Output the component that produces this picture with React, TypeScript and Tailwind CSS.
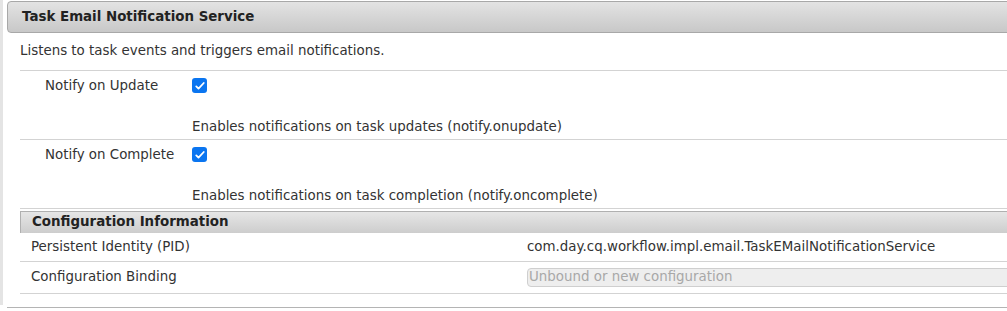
import { FC, ReactNode } from 'react'

const Check: FC = () => (
  <span className="flex h-[15px] w-[15px] items-center justify-center rounded-[3px] bg-[#0a75f0]">
    <svg viewBox="0 0 16 16" className="h-[12px] w-[12px]" fill="none">
      <path d="M3 8.5l3 3 7-7.5" stroke="white" strokeWidth="2.4" strokeLinecap="round" strokeLinejoin="round" />
    </svg>
  </span>
)

const OptionRow: FC<{ label: string; hint: string }> = ({ label, hint }) => (
  <div className="flex h-[69px] border-b border-[#d3d3d3]">
    <div className="w-[172px] shrink-0 pt-[5px] pl-[25px] text-[#333]">{label}</div>
    <div className="flex flex-col">
      <div className="pt-[7px]">
        <Check />
      </div>
      <div className="mt-[24px] text-[#333]">{hint}</div>
    </div>
  </div>
)

const InfoRow: FC<{ label: string; h: string; children: ReactNode }> = ({ label, h, children }) => (
  <div className={`flex items-center border-b border-[#d3d3d3] ${h}`}>
    <div className="w-[507px] shrink-0 pl-[11px]">{label}</div>
    <div className="flex-1">{children}</div>
  </div>
)

export default function App() {
  return (
    <div className="flex h-[311px] w-[1007px] overflow-hidden bg-white font-['DejaVu_Sans','Liberation_Sans',sans-serif] text-[13.4px] text-[#333]">
      <div className="h-[305px] w-[3px] shrink-0 bg-[#e4e4e4]" />
      <div className="ml-[4px] flex w-[1010px] shrink-0 flex-col">
        <div className="mt-[1px] flex h-[32px] items-center rounded-[4px] border border-[#a8a8a8] bg-gradient-to-b from-[#e3e3e3] to-[#c8c8c8] pl-[14px] text-[13.4px] font-bold text-[#222]">
          Task Email Notification Service
        </div>
        <div className="pl-[13px]">
          <div className="flex h-[38px] items-center border-b border-[#d3d3d3]">
            Listens to task events and triggers email notifications.
          </div>
          <OptionRow label="Notify on Update" hint="Enables notifications on task updates (notify.onupdate)" />
          <OptionRow label="Notify on Complete" hint="Enables notifications on task completion (notify.oncomplete)" />
          <div className="mt-[2px] flex h-[22px] items-center border-t border-l border-[#b0b0b0] bg-gradient-to-b from-[#e6e6e6] to-[#cdcdcd] pl-[11px] text-[13.4px] font-bold text-[#222]">
            Configuration Information
          </div>
          <InfoRow label="Persistent Identity (PID)" h="h-[29px]">
            com.day.cq.workflow.impl.email.TaskEMailNotificationService
          </InfoRow>
          <InfoRow label="Configuration Binding" h="h-[32px]">
            <div className="flex h-[19px] w-[490px] items-center rounded-[4px] border border-[#cfcfcf] bg-[#eeeeee] pl-[1px] text-[#a8a8a8]">
              Unbound or new configuration
            </div>
          </InfoRow>
        </div>
        <div className="mt-[13px] border-b border-[#b4b4b4]" />
      </div>
    </div>
  )
}
